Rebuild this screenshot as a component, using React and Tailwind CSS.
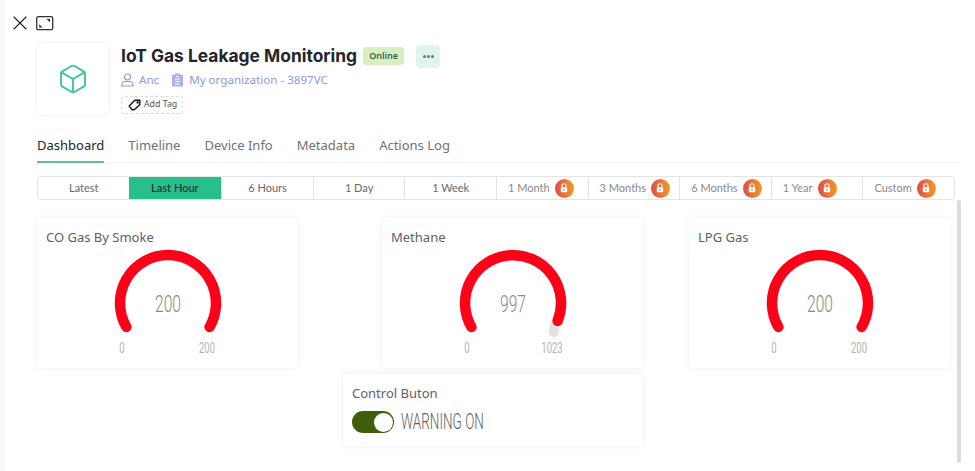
import { Box, X } from "lucide-react";

const ranges = [
  { label: "Latest" },
  { label: "Last Hour", active: true },
  { label: "6 Hours" },
  { label: "1 Day" },
  { label: "1 Week" },
  { label: "1 Month", locked: true },
  { label: "3 Months", locked: true },
  { label: "6 Months", locked: true },
  { label: "1 Year", locked: true },
  { label: "Custom", locked: true },
];

const tabs = ["Timeline", "Device Info", "Metadata", "Actions Log"];

function Gauge({ title, value, max, gap }) {
  return (
    <div className="w-[261px] h-[150px] bg-white rounded-sm shadow-[0_0_6px_rgba(0,0,0,0.07)] pt-[11px] px-[9px]">
      <div className="text-[13px] leading-[17px] text-[#5c5f66] font-['Noto_Sans',sans-serif]">{title}</div>
      <div className="relative w-[120px] h-[115px] mx-auto mt-[1px]">
        <svg width="120" height="100" viewBox="0 0 120 100" className="absolute left-0 top-[1px]">
          {gap && <path d="M101.6 78 L100.8 84" stroke="#e2e2e2" strokeWidth="10" fill="none" strokeLinecap="round" />}
          <path
            d={gap ? "M18.4 79 A48 48 0 1 1 104.6 73" : "M18.4 79 A48 48 0 1 1 101.6 79"}
            stroke="#ff0019"
            strokeWidth="10.5"
            fill="none"
            strokeLinecap="round"
          />
        </svg>
        <div className="absolute inset-x-0 top-[44px] text-center text-[23px] leading-[28px] text-[#85878c] font-['Roboto',sans-serif] font-light scale-x-[0.68]">
          {value}
        </div>
        <div className="absolute left-[-2px] top-[92px] w-[32px] text-center text-[14px] leading-[18px] text-[#b2b2b2] font-['Roboto',sans-serif] scale-x-[0.68]">
          0
        </div>
        <div className="absolute left-[83px] top-[92px] w-[32px] text-center text-[14px] leading-[18px] text-[#b2b2b2] font-['Roboto',sans-serif] scale-x-[0.68]">
          {max}
        </div>
      </div>
    </div>
  );
}

export default function App() {
  return (
    <div className="relative w-[975px] h-[471px] overflow-hidden bg-white flex font-['Lato',sans-serif]">
      <div className="w-[5px] bg-[#f8f8f8] shrink-0" />
      <div className="flex-1 min-w-0">
        <div className="flex items-center h-[43px] pl-[3px] pt-[3px] gap-[4px]">
          <X size={24} strokeWidth={1.1} className="text-[#222]" />
          <svg width="18" height="15" viewBox="0 0 18 15" fill="none">
            <rect x="0.7" y="0.7" width="16" height="13" rx="1.5" stroke="#333" strokeWidth="1.3" />
            <path d="M10.5 3h3.5v3.2zM3.2 11.5h3.5l-3.5-3.2z" fill="#333" />
          </svg>
        </div>

        <div className="flex ml-[32px] h-[72px]">
          <div className="w-[72px] h-[72px] rounded-md bg-white shadow-[0_0_3px_rgba(0,0,0,0.12)] flex items-center justify-center">
            <Box size={32} strokeWidth={1.4} className="text-[#3cc39f]" />
          </div>
          <div className="ml-[12px]">
            <div className="flex items-center h-[26px]">
              <h1 className="text-[17.4px] font-bold text-[#23252b] font-['Inter','Lato',sans-serif] w-[242px] whitespace-nowrap">
                IoT Gas Leakage Monitoring
              </h1>
              <span className="w-[41px] h-[18px] rounded-sm bg-[#d6f0c2] text-[9px] font-semibold text-[#35553a] flex items-center justify-center font-['Open_Sans',sans-serif]">
                Online
              </span>
              <span className="ml-[12px] w-[24px] h-[23px] rounded-sm bg-[#e0f5ef] flex items-center justify-center gap-[1px]">
                <i className="w-[3px] h-[3px] rounded-full bg-[#5d7f7a]" />
                <i className="w-[3px] h-[3px] rounded-full bg-[#5d7f7a]" />
                <i className="w-[3px] h-[3px] rounded-full bg-[#5d7f7a]" />
              </span>
            </div>
            <div className="flex items-center h-[22px] text-[11.6px] text-[#8e98df] font-['Noto_Sans',sans-serif]">
              <svg width="13" height="14" viewBox="0 0 13 14" fill="none" stroke="currentColor" strokeWidth="1.2">
                <circle cx="6.5" cy="4" r="3" />
                <path d="M1 13v-1.5c0-1.8 1.6-3 3.2-3h4.6c1.6 0 3.2 1.2 3.2 3V13z" />
              </svg>
              <span className="ml-[5px]">Anc</span>
              <svg width="13" height="14" viewBox="0 0 13 14" className="ml-[12px]" fill="currentColor" opacity="0.75">
                <path d="M4 0.5h5v1.5h3v11.5H1V2h3z" />
                <path d="M5 3.5h3M4 6h5M4 8.5h5M4 11h5" stroke="#fff" strokeWidth="1" />
              </svg>
              <span className="ml-[5px]">My organization - 3897VC</span>
            </div>
            <div className="mt-[5px] w-[62px] h-[18px] rounded-sm border border-dashed border-[#dcdcdc] flex items-center pl-[6px] gap-[3px] text-[8.8px] text-[#555] font-['Noto_Sans',sans-serif]">
              <svg width="13" height="12" viewBox="0 0 13 12" fill="none" stroke="#111" strokeWidth="1.4" strokeLinejoin="round">
                <path d="M1.2 7 L6.8 1.2 H11.8 V5.8 L6.2 10.8 H4.2 Z" />
                <circle cx="9.6" cy="3.4" r="0.5" />
              </svg>
              Add Tag
            </div>
          </div>
        </div>

        <div className="ml-[32px] mr-[15px] mt-[15px] h-[33px] flex items-start border-b border-[#f3f3f3] gap-[24px] text-[13px] leading-[30px] text-[#6f7175] font-['Noto_Sans',sans-serif]">
          <div className="h-[33px] border-b-2 border-[#5cbfa5] text-[#23252b] -mb-px">Dashboard</div>
          {tabs.map((t) => (
            <div key={t}>{t}</div>
          ))}
        </div>

        <div className="ml-[32px] mt-[13px] w-[918px] h-[24px] grid grid-cols-10 rounded-sm border border-[#e4e4e4] text-[11px]">
          {ranges.map((r, i) => (
            <div
              key={r.label}
              className={
                r.active
                  ? "flex items-center justify-center -ml-px bg-[#27c08c] font-semibold text-[#1d3b30]"
                  : r.locked
                    ? "flex items-center pl-[11px] gap-[5px] border-l border-[#e4e4e4] text-[#8a8a8a]"
                    : "flex items-center justify-center text-[#66686c] " + (i > 0 ? "border-l border-[#e4e4e4]" : "")
              }
            >
              <span>{r.label}</span>
              {r.locked && (
                <span className="w-[19px] h-[19px] rounded-full bg-gradient-to-r from-[#dd4a4a] to-[#f09a22] flex items-center justify-center">
                  <svg width="8" height="10" viewBox="0 0 8 10" fill="none">
                    <path d="M2 4.5V2.8a2 2 0 0 1 4 0V4.5" stroke="#fff" strokeWidth="1.1" />
                    <rect x="0.8" y="4.2" width="6.4" height="5" rx="0.7" fill="#fff" />
                    <rect x="3.3" y="5.8" width="1.4" height="1.6" fill="#e8703a" />
                  </svg>
                </span>
              )}
            </div>
          ))}
        </div>

        <div className="ml-[32px] mt-[18px] flex">
          <Gauge title="CO Gas By Smoke" value="200" max="200" />
          <div className="ml-[84px]">
            <Gauge title="Methane" value="997" max="1023" gap />
          </div>
          <div className="ml-[46px]">
            <Gauge title="LPG Gas" value="200" max="200" />
          </div>
        </div>

        <div className="ml-[338px] mt-[6px] w-[300px] h-[72px] bg-white rounded-sm shadow-[0_0_6px_rgba(0,0,0,0.08)] pt-[11px] px-[9px]">
          <div className="text-[13px] leading-[17px] text-[#5c5f66] font-['Noto_Sans',sans-serif]">Control Buton</div>
          <div className="flex items-center mt-[8px] h-[24px]">
            <div className="w-[42px] h-[22px] rounded-full bg-[#3f5e0b] flex items-center justify-end pr-[1px]">
              <div className="w-[19px] h-[19px] rounded-full bg-white" />
            </div>
            <span className="ml-[7px] text-[22.5px] font-light text-[#5f6166] whitespace-nowrap origin-left scale-x-[0.6] font-['Roboto',sans-serif]">
              WARNING ON
            </span>
          </div>
        </div>
      </div>

      <div className="absolute left-[957px] top-[200px] w-[4px] h-[263px] rounded-full bg-[#dcdcdc]" />
    </div>
  );
}
